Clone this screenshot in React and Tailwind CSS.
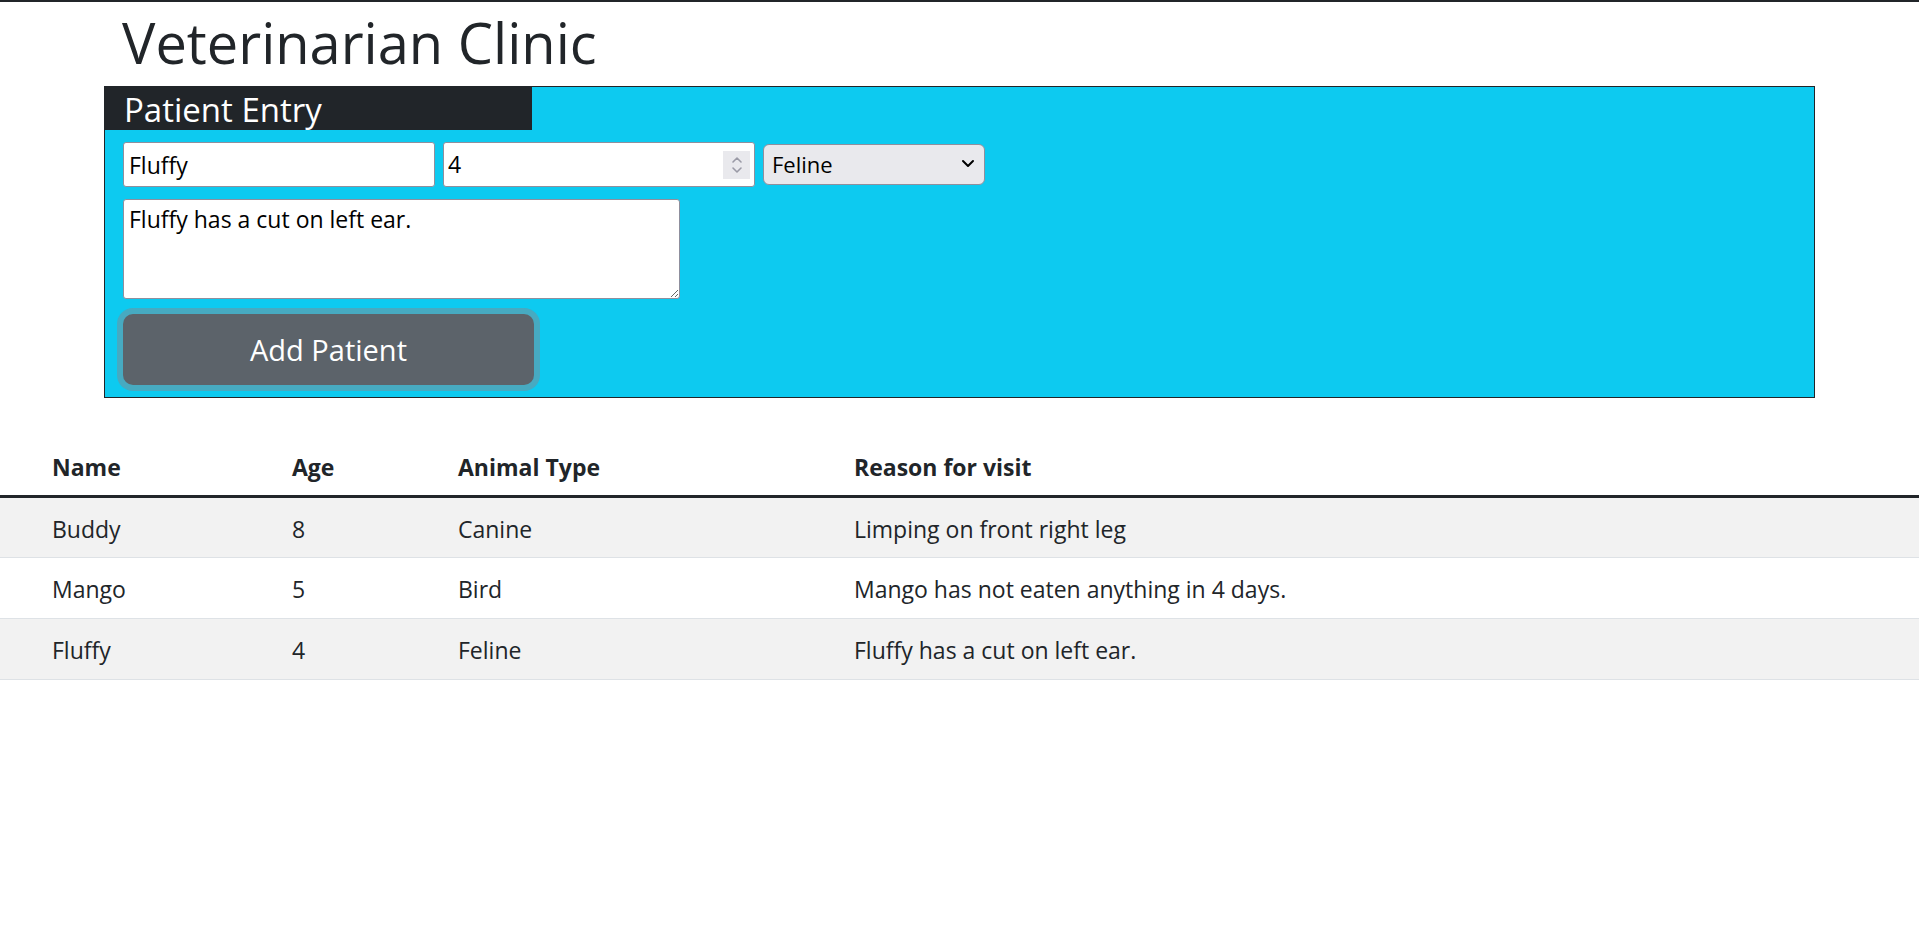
import React, { useState } from 'react';

const patients = [
    { name: 'Buddy', age: 8, type: 'Canine', reason: 'Limping on front right leg' },
    { name: 'Mango', age: 5, type: 'Bird', reason: 'Mango has not eaten anything in 4 days.' },
    { name: 'Fluffy', age: 4, type: 'Feline', reason: 'Fluffy has a cut on left ear.' },
];

const App = () => {
    const [name, setName] = useState('Fluffy');
    const [age, setAge] = useState('4');
    const [type, setType] = useState('Feline');
    const [reason, setReason] = useState('Fluffy has a cut on left ear.');

    return (
        <div className="min-h-[930px] bg-white text-[#212529] border-t-2 border-[#212529] font-['Open_Sans',sans-serif]">
            <div className="mx-[104px]">
                <h1 className="pl-[18px] pt-[4px] h-[72px] text-[56px] leading-[72px] font-normal">Veterinarian Clinic</h1>

                {/* Patient entry panel */}
                <div className="mt-[12px] bg-[#0dcaf0] border border-[#212529] pb-[6px]">
                    <div className="w-[427px] h-[43px] bg-[#212529] text-white text-[33px] leading-[46px] pl-[19px]">
                        Patient Entry
                    </div>

                    <div className="pl-[18px] pt-[12px]">
                        <div className="flex items-center gap-[8px]">
                            <input
                                value={name}
                                onChange={e => setName(e.target.value)}
                                className="w-[312px] h-[45px] bg-white border border-[#8f8f9d] rounded-[3px] px-[5px] text-[23px] text-black outline-none"
                            />
                            <div className="w-[312px] h-[45px] bg-white border border-[#8f8f9d] rounded-[3px] flex items-center pl-[4px] pr-[4px]">
                                <input
                                    value={age}
                                    onChange={e => setAge(e.target.value)}
                                    className="flex-1 min-w-0 text-[23px] text-black outline-none bg-transparent"
                                />
                                <div className="w-[27px] h-[28px] bg-[#e9e9ed] flex flex-col items-center justify-center">
                                    <svg width="12" height="22" viewBox="0 0 12 22" fill="none" stroke="#9a9aa6" strokeWidth="1.6" strokeLinecap="round" strokeLinejoin="round">
                                        <path d="M2 8 L6 4 L10 8" />
                                        <path d="M2 14 L6 18 L10 14" />
                                    </svg>
                                </div>
                            </div>
                            <div className="relative">
                                <select
                                    value={type}
                                    onChange={e => setType(e.target.value)}
                                    className="appearance-none w-[222px] h-[41px] bg-[#e9e9ed] border border-[#8f8f9d] rounded-[6px] pl-[8px] text-[22px] text-black outline-none"
                                >
                                    <option>Canine</option>
                                    <option>Feline</option>
                                    <option>Bird</option>
                                </select>
                                <svg className="absolute right-[10px] top-[15px] pointer-events-none" width="14" height="10" viewBox="0 0 14 10" fill="none" stroke="#000" strokeWidth="2" strokeLinecap="round" strokeLinejoin="round">
                                    <path d="M2 2 L7 7 L12 2" />
                                </svg>
                            </div>
                        </div>

                        <textarea
                            value={reason}
                            onChange={e => setReason(e.target.value)}
                            className="block mt-[12px] w-[557px] h-[100px] bg-white border border-[#8f8f9d] rounded-[3px] px-[5px] py-[4px] text-[23px] leading-[30px] text-black outline-none"
                        />

                        <button className="mt-[15px] mb-[6px] w-[411px] h-[71px] bg-[#5c636a] text-white text-[29px] rounded-[10px] shadow-[0_0_0_6px_rgba(130,138,145,0.5)]">
                            Add Patient
                        </button>
                    </div>
                </div>
            </div>

            {/* Patients table */}
            <table className="mt-[38px] w-full border-collapse text-[23px]">
                <thead>
                    <tr className="border-b-[3px] border-[#212529]">
                        <th className="w-[240px] pl-[52px] h-[60px] pt-[4px] text-left font-bold">Name</th>
                        <th className="w-[166px] pl-[52px] pt-[4px] text-left font-bold">Age</th>
                        <th className="w-[396px] pl-[52px] pt-[4px] text-left font-bold">Animal Type</th>
                        <th className="pl-[52px] pt-[4px] text-left font-bold">Reason for visit</th>
                    </tr>
                </thead>
                <tbody>
                    {patients.map((p, i) => (
                        <tr key={p.name} className={`border-b border-[#dee2e6] ${i % 2 === 0 ? 'bg-[#f2f2f2]' : 'bg-white'}`}>
                            <td className="pl-[52px] h-[61px] pt-[4px]">{p.name}</td>
                            <td className="pl-[52px] pt-[4px]">{p.age}</td>
                            <td className="pl-[52px] pt-[4px]">{p.type}</td>
                            <td className="pl-[52px] pt-[4px]">{p.reason}</td>
                        </tr>
                    ))}
                </tbody>
            </table>
        </div>
    );
};

export default App;
